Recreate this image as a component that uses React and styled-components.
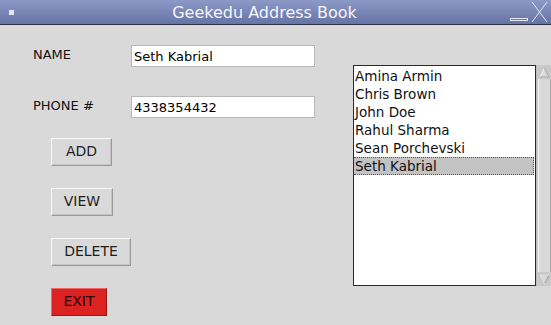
import React, { useState } from 'react';
import styled, { createGlobalStyle } from 'styled-components';

const GlobalStyle = createGlobalStyle`
  html, body {
    margin: 0;
    padding: 0;
    background: #d9d9d9;
    font-family: "DejaVu Sans", sans-serif;
    overflow: hidden;
  }
`;

const Window = styled.div`
  width: 551px;
  height: 325px;
  display: flex;
  flex-direction: column;
  background: #d9d9d9;
`;

const TitleBar = styled.div`
  height: 24px;
  display: flex;
  align-items: center;
  background: linear-gradient(#8d99c6, #6673a6);
  border-bottom: 1px solid #2c3040;
  color: #f6f6fa;
  font-size: 16px;
`;

const MenuDot = styled.div`
  width: 5px;
  height: 5px;
  margin-left: 9px;
  background: #e4e6f0;
`;

const Title = styled.div`
  flex: 1;
  text-align: center;
  padding-left: 5px;
  margin-top: 1px;
`;

const Controls = styled.div`
  display: flex;
  align-items: flex-end;
  margin-right: 3px;
  height: 22px;
`;

const Body = styled.div`
  flex: 1;
  display: flex;
`;

const Form = styled.div`
  flex: 0 0 353px;
  padding-top: 20px;
  display: flex;
  flex-direction: column;
`;

const Row = styled.div`
  display: flex;
  align-items: center;
  margin-bottom: ${({ gap }) => gap}px;
`;

const Label = styled.div`
  width: 98px;
  padding-left: 33px;
  font-size: 13px;
  color: #111;
  margin-top: -3px;
`;

const Entry = styled.input`
  box-sizing: border-box;
  width: 184px;
  height: 22px;
  border: 1px solid #b8b8b8;
  background: #fff;
  font-family: "DejaVu Sans", sans-serif;
  font-size: 13px;
  color: #000;
  padding: 0 2px;
  outline: none;
`;

const Buttons = styled.div`
  display: flex;
  flex-direction: column;
  align-items: flex-start;
  gap: 22px;
  padding-left: 51px;
  margin-top: 20px;
`;

const Button = styled.button`
  box-sizing: border-box;
  height: 28px;
  width: ${({ w }) => w}px;
  font-family: "DejaVu Sans", sans-serif;
  font-size: 14px;
  color: ${({ danger }) => (danger ? '#2a0000' : '#1e1e1e')};
  background: ${({ danger }) => (danger ? '#dd2222' : '#d9d9d9')};
  border: 1px solid;
  border-color: ${({ danger }) =>
    danger ? '#ee6a6a #9a1616 #9a1616 #ee6a6a' : '#fafafa #9a9a9a #9a9a9a #fafafa'};
  box-shadow: ${({ danger }) => (danger ? 'none' : 'inset -1px -1px 0 #c4c4c4')};
  padding: 0 0 2px;
`;

const ListArea = styled.div`
  margin-top: 40px;
  display: flex;
  height: 221px;
`;

const List = styled.div`
  box-sizing: border-box;
  width: 183px;
  height: 221px;
  background: #fff;
  border: 1px solid #2a2a2a;
  padding-top: 1px;
`;

const Item = styled.div`
  box-sizing: border-box;
  height: 18px;
  line-height: 17px;
  font-size: 13.5px;
  color: #111;
  padding-left: 1px;
  background: ${({ selected }) => (selected ? '#c3c3c3' : 'transparent')};
  border: 1px ${({ selected }) => (selected ? 'dotted #555' : 'solid transparent')};
  border-left: none;
  margin-right: 1px;
`;

const Scrollbar = styled.div`
  width: 15px;
  display: flex;
  flex-direction: column;
  background: #c9c9c9;
  border-left: 1px solid #bdbdbd;
`;

const Trough = styled.div`
  flex: 1;
  margin: 0 1px;
  background: #d9d9d9;
  border-left: 1px solid #f4f4f4;
  border-right: 1px solid #a8a8a8;
`;

const ArrowBox = styled.div`
  height: 14px;
  display: flex;
  justify-content: center;
  align-items: center;
`;

const names = ['Amina Armin', 'Chris Brown', 'John Doe', 'Rahul Sharma', 'Sean Porchevski', 'Seth Kabrial'];

const App = () => {
  const [name, setName] = useState('Seth Kabrial');
  const [phone, setPhone] = useState('4338354432');
  const [selected, setSelected] = useState(5);

  return (
    <Window>
      <GlobalStyle />
      <TitleBar>
        <MenuDot />
        <Title>Geekedu Address Book</Title>
        <Controls>
          <svg width="38" height="22" viewBox="0 0 38 22">
            <rect x="0.5" y="17.5" width="17" height="2" fill="none" stroke="#e6e8f2" strokeWidth="1" />
            <path d="M22 21 L37 1 M22 1 L37 21" stroke="#e6e8f2" strokeWidth="1" fill="none" />
          </svg>
        </Controls>
      </TitleBar>
      <Body>
        <Form>
          <Row gap={29}>
            <Label>NAME</Label>
            <Entry value={name} onChange={(e) => setName(e.target.value)} />
          </Row>
          <Row gap={0}>
            <Label>PHONE #</Label>
            <Entry value={phone} onChange={(e) => setPhone(e.target.value)} />
          </Row>
          <Buttons>
            <Button w={61}>ADD</Button>
            <Button w={62}>VIEW</Button>
            <Button w={80}>DELETE</Button>
            <Button w={56} danger>EXIT</Button>
          </Buttons>
        </Form>
        <ListArea>
          <List>
            {names.map((n, i) => (
              <Item key={n} selected={i === selected} onClick={() => setSelected(i)}>
                {n}
              </Item>
            ))}
          </List>
          <Scrollbar>
            <ArrowBox>
              <svg width="11" height="11" viewBox="0 0 11 11">
                <path d="M1 10 L5.5 1 L10 10 Z" fill="#d9d9d9" stroke="#f6f6f6" strokeWidth="1" />
                <path d="M1 10 L10 10 L5.5 1" fill="none" stroke="#9a9a9a" strokeWidth="1" />
              </svg>
            </ArrowBox>
            <Trough />
            <ArrowBox>
              <svg width="11" height="11" viewBox="0 0 11 11">
                <path d="M1 1 L10 1 L5.5 10 Z" fill="#d9d9d9" stroke="#9a9a9a" strokeWidth="1" />
                <path d="M1 1 L10 1 M1 1 L5.5 10" fill="none" stroke="#f6f6f6" strokeWidth="1" />
              </svg>
            </ArrowBox>
          </Scrollbar>
        </ListArea>
      </Body>
    </Window>
  );
};

export default App;
